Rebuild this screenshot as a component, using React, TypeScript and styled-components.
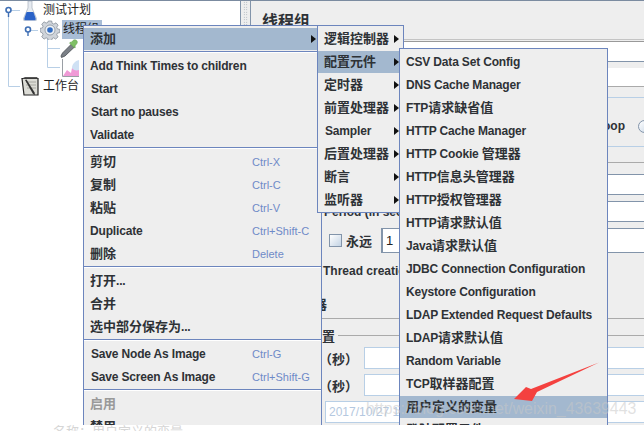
import React from "react";
import styled, { createGlobalStyle } from "styled-components";

const Global = createGlobalStyle`
  html, body { margin: 0; padding: 0; background: #fff; }
  body { font-family: "Liberation Sans", "Noto Sans CJK SC", sans-serif; }
  * { box-sizing: border-box; }
`;

const INK = "#2e3236";
const MENU_LINE = "#6c85bd";
const STEEL = "#8294aa";
const SKY = "#b8cfe6";

const Page = styled.div`
  width: 644px;
  height: 431px;
  overflow: hidden;
  background: #fff;
`;
const Stage = styled.div`
  position: relative;
  display: flex;
  height: 425px;
  overflow: hidden;
  border-top: 1px solid #7b8ba0;
  background: #eee;
`;
const Footer = styled.div`
  display: flex;
  align-items: flex-start;
  height: 6px;
  overflow: hidden;
  padding-left: 53px;
  background: #fff;
  color: #d6d6d6;
  font-size: 13px;
  line-height: 13px;
`;

/* ---- tree ---- */
const Tree = styled.div`
  position: relative;
  width: 241px;
  flex: none;
  background: #fff;
  border-right: 1px solid ${STEEL};
`;
const TreeLines = styled.svg`
  position: absolute;
  left: 0;
  top: -1px;
`;
const TreeRow = styled.div<{ $indent: number }>`
  display: flex;
  align-items: center;
  height: 19px;
  padding-left: ${(p) => p.$indent}px;
`;
const TreeIcon = styled.svg`
  flex: none;
  position: relative;
`;
const TreeLabel = styled.span<{ $selected?: boolean; $gap: number }>`
  font-size: 12px;
  line-height: 19px;
  color: #222;
  margin-left: ${(p) => p.$gap}px;
  padding: 0 ${(p) => (p.$selected ? "3px 0 1px" : "0")};
  background: ${(p) => (p.$selected ? "#a8bdd6" : "transparent")};
`;

const Grip = styled.div`
  width: 9px;
  flex: none;
  display: flex;
  justify-content: center;
  background: #eee;
`;
const GripDots = styled.div`
  width: 5px;
  height: 40px;
  background-image: radial-gradient(#9aa4ae 0.6px, transparent 0.8px);
  background-size: 2.5px 2.5px;
`;

/* ---- right panel ---- */
const Panel = styled.div`
  flex: 1;
  min-width: 0;
  overflow: hidden;
  border-left: 1px solid ${STEEL};
  display: flex;
  flex-direction: column;
  color: ${INK};
  font-size: 12px;
  font-weight: 700;
`;
const TitleBand = styled.div`
  height: 39px;
  flex: none;
  display: flex;
  align-items: center;
  padding-left: 11px;
  border-bottom: 1px solid #c4c4c4;
  font-size: 16px;
`;
const Band = styled.div<{ $h: number; $bg?: string; $line?: string }>`
  height: ${(p) => p.$h}px;
  flex: none;
  background: ${(p) => p.$bg ?? "transparent"};
  border-bottom: ${(p) => (p.$line ? `1px solid ${p.$line}` : "0")};
`;
const GroupBand = styled.div`
  height: 50px;
  flex: none;
  display: flex;
  align-items: center;
  justify-content: flex-end;
  padding-top: 8px;
  border-top: 1px solid ${SKY};
  border-bottom: 1px solid ${SKY};
`;
const Radio = styled.span`
  width: 13px;
  height: 13px;
  flex: none;
  margin: 0 -7px 0 13px;
  border-radius: 50%;
  border: 1px solid ${STEEL};
  background: linear-gradient(135deg, #fff, #c9d7e6);
`;
const LabelRow = styled.div<{ $h: number; $left: number; $rule?: boolean }>`
  height: ${(p) => p.$h}px;
  flex: none;
  display: flex;
  align-items: center;
  padding-left: ${(p) => p.$left}px;
  white-space: nowrap;
  border-bottom: ${(p) => (p.$rule ? "1px solid #aaa" : "0")};
`;
const FieldLabel = styled.span<{ $w: number }>`
  width: ${(p) => p.$w}px;
  flex: none;
  overflow: hidden;
`;
const CjkLabel = styled.span`
  font-size: 13px;
`;
const Field = styled.div<{ $line: string }>`
  flex: 1;
  align-self: stretch;
  display: flex;
  align-items: center;
  background: #fff;
  border-top: 1px solid ${(p) => p.$line};
  border-bottom: 1px solid ${(p) => p.$line};
  border-left: 1px solid ${(p) => p.$line};
  padding-left: 3px;
  font-weight: 400;
  color: #222;
  font-size: 13px;
`;
const DateText = styled.span`
  color: #b4c8e0;
  font-size: 12px;
  white-space: nowrap;
`;
const Check = styled.span`
  width: 13px;
  height: 13px;
  flex: none;
  margin-right: 4px;
  border: 1px solid ${STEEL};
  background: linear-gradient(135deg, #fff, #c3d3e4);
`;
const LoopField = styled(Field)`
  margin-left: 9px;
  border-left: 2px solid ${STEEL};
`;
const LegendRow = styled(LabelRow)`
  padding-top: 4px;
  gap: 3px;
`;
const LegendLine = styled.span`
  flex: 1;
  height: 1px;
  background: #aaa;
`;

/* ---- menus ---- */
const Menu = styled.div<{ $x: number; $y: number; $w: number; $z: number }>`
  position: absolute;
  left: ${(p) => p.$x}px;
  top: ${(p) => p.$y}px;
  width: ${(p) => p.$w}px;
  z-index: ${(p) => p.$z};
  padding: 1px 0;
  background: #eee;
  border: 1px solid ${MENU_LINE};
  color: ${INK};
`;
const Item = styled.div<{ $active?: boolean; $off?: boolean; $pad: number }>`
  display: flex;
  align-items: center;
  height: 23px;
  padding-left: ${(p) => p.$pad}px;
  white-space: nowrap;
  font-size: 12px;
  font-weight: 700;
  letter-spacing: -0.17px;
  color: ${(p) => (p.$off ? "#999" : INK)};
  background: ${(p) => (p.$active ? "#a3b8cf" : "transparent")};
  box-shadow: ${(p) => (p.$active ? "inset 0 1px 0 #eee" : "none")};
`;
const ItemText = styled.span<{ $lift?: boolean }>`
  flex: 1;
  padding-bottom: ${(p) => (p.$lift ? 2 : 0)}px;
`;
const CjkRun = styled.span`
  font-size: 13px;
  letter-spacing: 0;
`;
const Shortcut = styled.span`
  width: 69px;
  flex: none;
  font-size: 11px;
  font-weight: 400;
  letter-spacing: 0;
  color: #6f8ac8;
`;
const Caret = styled.span<{ $right: number }>`
  width: 0;
  height: 0;
  margin-right: ${(p) => p.$right}px;
  border-left: 5px solid #111;
  border-top: 4px solid transparent;
  border-bottom: 4px solid transparent;
`;
const Separator = styled.div`
  height: 3px;
  border-top: 1px solid ${MENU_LINE};
  margin-top: 1px;
  background: linear-gradient(#fff 1px, transparent 1px);
`;

const Arrow = styled.svg`
  position: absolute;
  left: 0;
  top: -1px;
  z-index: 5;
  pointer-events: none;
`;
const Watermark = styled.span`
  position: absolute;
  left: 366px;
  top: 398px;
  z-index: 6;
  font-size: 15.9px;
  line-height: 20px;
  white-space: nowrap;
  color: rgba(200, 200, 200, 0.55);
`;

const Flask = () => (
  <TreeIcon width="14" height="20" viewBox="0 0 14 20">
    <path d="M5 0h4v7l4.500 10.500c.4 1.200-.3 2.500-1.600 2.500H2.100C.8 20 .1 18.700.5 17.500L5 7z" fill="#e6ebf1" stroke="#a6b0bc" strokeWidth=".7" />
    <path d="M3.600 11h6.800l2.300 6.400c.3.9-.2 1.800-1.200 1.800H2.500c-1 0-1.500-.9-1.200-1.800z" fill="#2a62c8" />
  </TreeIcon>
);
const Gear = () => (
  <TreeIcon width="20" height="20" viewBox="0 0 20 20">
    <path d="M8.300 1h3.400l.5 2.400 1.700.7 2.100-1.300 2.100 2.400-1.400 2 .7 1.700 2.400.5v3.200l-2.400.5-.7 1.700 1.400 2-2.400 2.300-2-1.300-1.600.7-.5 2.400H8.300l-.5-2.400-1.700-.7-2 1.300-2.400-2.300 1.400-2-.7-1.700L0 11.600V8.400l2.400-.5.7-1.700-1.400-2 2.400-2.400 2 1.300 1.700-.7z" fill="#cfd4da" stroke="#868f99" strokeWidth=".8" />
    <circle cx="10" cy="10" r="5" fill="#eef1f4" stroke="#86919c" strokeWidth=".8" />
    <circle cx="10" cy="10" r="2.800" fill="#2f6bc2" />
  </TreeIcon>
);
const Dropper = () => (
  <TreeIcon width="19" height="19" viewBox="0 0 19 19">
    <path d="M12 4.500l3 3L5 17l-3.500 1.500L1 17l1.500-3z" fill="#7b8087" stroke="#474c52" strokeWidth=".8" />
    <path d="M11 3.500l1.800-1.800c1-1 2.500-1.300 3.700-.3 1.200 1 1 2.600 0 3.700L14.700 7.300l.8.8-1 1-5-5 1-1z" fill="#7fc066" stroke="#579644" strokeWidth=".5" />
  </TreeIcon>
);
const ChartIcon = () => (
  <TreeIcon width="18" height="18" viewBox="0 0 18 18">
    <path d="M1.500 0v17.500H18" fill="none" stroke="#9a9fa5" strokeWidth="1" />
    <path d="M2 17l4-6 4 3 1-5 7 1v7z" fill="#f09ad6" />
    <path d="M11 9c0-4 3-7 7-8v10c-3 1-6 0-7-2z" fill="#cfe1f4" />
  </TreeIcon>
);
const Clipboard = () => (
  <TreeIcon width="18" height="19" viewBox="0 0 18 19">
    <path d="M1 1.500h16v16.500H3z" fill="#dcdcd6" stroke="#222" strokeWidth="1.200" />
    <path d="M2 1l2-1h12l1 1.500H2z" fill="#555" />
    <path d="M5 5h10M5 8h10M6 11h9" stroke="#9a9a94" strokeWidth=".8" />
    <path d="M4 3l8 14 2 1-.4-2.500L5.500 2.500z" fill="#333" />
  </TreeIcon>
);

/* Chinese runs are drawn a size larger than the Latin ones, as in the original menus. */
const HAN = /([\u4e00-\u9fff]+)/;
const MenuText = ({ text }: { text: string }) => (
  <ItemText $lift={HAN.test(text)}>
    {text.split(HAN).map((part, i) =>
      i % 2 === 1 ? <CjkRun key={i}>{part}</CjkRun> : part
    )}
  </ItemText>
);

type Row =
  | { t: string; key?: string; active?: boolean; off?: boolean; pad?: number; sub?: boolean }
  | "sep";

const mainRows: Row[] = [
  { t: "添加", active: true, sub: true },
  "sep",
  { t: "Add Think Times to children" },
  { t: "Start", pad: 7 },
  { t: "Start no pauses", pad: 7 },
  { t: "Validate" },
  "sep",
  { t: "剪切", key: "Ctrl-X" },
  { t: "复制", key: "Ctrl-C" },
  { t: "粘贴", key: "Ctrl-V" },
  { t: "Duplicate", key: "Ctrl+Shift-C" },
  { t: "删除", key: "Delete" },
  "sep",
  { t: "打开..." },
  { t: "合并" },
  { t: "选中部分保存为..." },
  "sep",
  { t: "Save Node As Image", pad: 7, key: "Ctrl-G" },
  { t: "Save Screen As Image", pad: 7, key: "Ctrl+Shift-G" },
  "sep",
  { t: "启用", off: true },
  { t: "禁用" },
];

const subRows: string[] = ["逻辑控制器", "配置元件", "定时器", "前置处理器", "Sampler", "后置处理器", "断言", "监听器"];

const configRows: string[] = [
  "CSV Data Set Config",
  "DNS Cache Manager",
  "FTP请求缺省值",
  "HTTP Cache Manager",
  "HTTP Cookie 管理器",
  "HTTP信息头管理器",
  "HTTP授权管理器",
  "HTTP请求默认值",
  "Java请求默认值",
  "JDBC Connection Configuration",
  "Keystore Configuration",
  "LDAP Extended Request Defaults",
  "LDAP请求默认值",
  "Random Variable",
  "TCP取样器配置",
  "用户定义的变量",
  "登陆配置元件",
];

export default function App() {
  return (
    <Page>
      <Global />
      <Stage>
        <Tree>
          <TreeLines width="100" height="100" viewBox="0 0 100 100">
            <g fill="none" stroke={SKY} strokeWidth="1">
              <path d="M8.500 14V86.500H20" />
              <path d="M11 10.500H20M30 30.500H38" />
              <path d="M47.500 39V67.500H60M47.500 48.500H60" />
            </g>
            <g fill="#fff" stroke="#3f6fb5" strokeWidth="1.600">
              <circle cx="8.500" cy="10" r="2.500" />
              <circle cx="28" cy="29.500" r="2.500" />
            </g>
            <path d="M8.500 13V17M28 32V36" stroke="#3f6fb5" strokeWidth="1.400" />
          </TreeLines>
          <TreeRow $indent={23}>
            <Flask />
            <TreeLabel $gap={6}>测试计划</TreeLabel>
          </TreeRow>
          <TreeRow $indent={40}>
            <Gear />
            <TreeLabel $selected $gap={2}>线程组</TreeLabel>
          </TreeRow>
          <TreeRow $indent={60}>
            <Dropper />
          </TreeRow>
          <TreeRow $indent={61}>
            <ChartIcon />
          </TreeRow>
          <TreeRow $indent={21}>
            <Clipboard />
            <TreeLabel $gap={4}>工作台</TreeLabel>
          </TreeRow>
        </Tree>
        <Grip>
          <GripDots />
        </Grip>
        <Panel>
          <TitleBand>线程组</TitleBand>
          <Band $h={2} $line="#999" />
          <Band $h={20} $bg="#fff" $line={STEEL} />
          <Band $h={6} />
          <Band $h={19} $bg="#fff" $line="#aaa" />
          <Band $h={10} />
          <GroupBand>
            Loop
            <Radio />
          </GroupBand>
          <Band $h={16} $line="#aaa" />
          <Band $h={11} />
          <LabelRow $h={21} $left={73}>
            <Field $line={STEEL} />
          </LabelRow>
          <Band $h={6} />
          <LabelRow $h={21} $left={73}>
            <FieldLabel $w={200}>Period (in seconds):</FieldLabel>
            <Field $line={STEEL} />
          </LabelRow>
          <Band $h={6} />
          <LabelRow $h={25} $left={78}>
            <Check />
            <CjkLabel>永远</CjkLabel>
            <LoopField $line={STEEL}>1</LoopField>
          </LabelRow>
          <LabelRow $h={36} $left={72}>Thread creation</LabelRow>
          <LabelRow $h={30} $left={63} $rule>
            <CjkLabel>器</CjkLabel>
          </LabelRow>
          <LegendRow $h={28} $left={71}>
            <CjkLabel>置</CjkLabel>
            <LegendLine />
          </LegendRow>
          <LabelRow $h={22} $left={68}>
            <FieldLabel $w={45}><CjkLabel>（秒）</CjkLabel></FieldLabel>
            <Field $line={SKY} />
          </LabelRow>
          <Band $h={5} />
          <LabelRow $h={22} $left={68}>
            <FieldLabel $w={45}><CjkLabel>（秒）</CjkLabel></FieldLabel>
            <Field $line={SKY} />
          </LabelRow>
          <Band $h={5} />
          <LabelRow $h={22} $left={74}>
            <Field $line={SKY}>
              <DateText>2017/10/27 13:45:30</DateText>
            </Field>
          </LabelRow>
        </Panel>

        <Menu $x={83} $y={24} $w={239} $z={1}>
          {mainRows.map((r, i) =>
            r === "sep" ? (
              <Separator key={i} />
            ) : (
              <Item key={i} $active={r.active} $off={r.off} $pad={r.pad ?? 6}>
                <MenuText text={r.t} />
                {r.key && <Shortcut>{r.key}</Shortcut>}
                {r.sub && <Caret $right={5} />}
              </Item>
            )
          )}
        </Menu>
        <Menu $x={317} $y={24} $w={87} $z={2}>
          {subRows.map((t, i) => (
            <Item key={t} $active={i === 1} $pad={t === "Sampler" ? 7 : 6}>
              <MenuText text={t} />
              <Caret $right={4} />
            </Item>
          ))}
        </Menu>
        <Menu $x={399} $y={47} $w={209} $z={3}>
          {configRows.map((t, i) => (
            <Item key={t} $active={i === 15} $pad={6}>
              <MenuText text={t} />
            </Item>
          ))}
        </Menu>
        <Arrow width="644" height="431" viewBox="0 0 644 431">
          <path d="M599 362.500L537 392l-5 9-18-2 12-12 5 2z" fill="#f4413f" />
        </Arrow>
        <Watermark>https://blog.csdn.net/weixin_43639443</Watermark>
      </Stage>
      <Footer>名称：用户定义的变量</Footer>
    </Page>
  );
}
